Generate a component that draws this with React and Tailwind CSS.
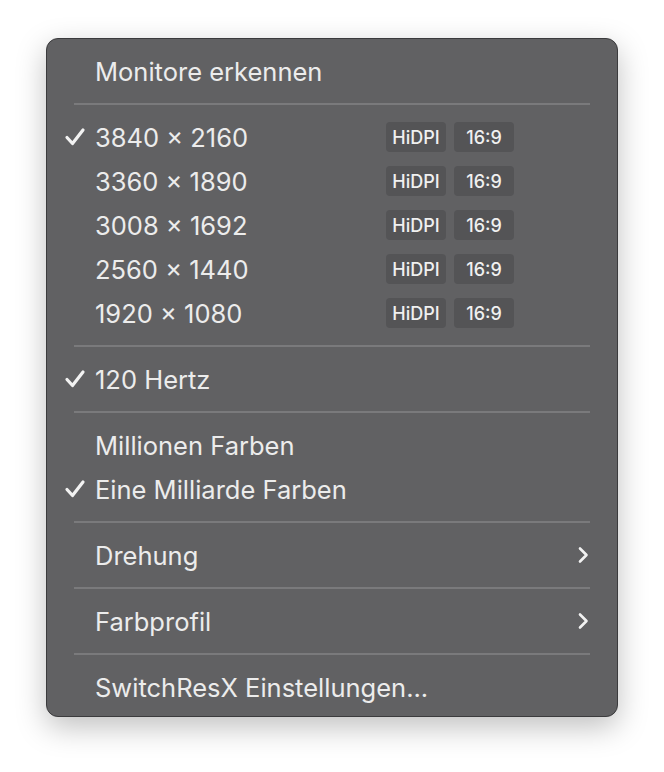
import React from 'react';

const Check = () => (
  <svg width="22" height="20" viewBox="0 0 22 20" className="absolute left-[17px] top-1/2 -translate-y-1/2">
    <path d="M3 10.5 L8.5 16.5 L19 3" fill="none" stroke="#f2f2f2" strokeWidth="3.2" strokeLinecap="round" strokeLinejoin="round" />
  </svg>
);

const Chevron = () => (
  <svg width="12" height="18" viewBox="0 0 12 18" className="absolute right-[28px] top-1/2 -translate-y-1/2">
    <path d="M3 2.5 L9.5 9 L3 15.5" fill="none" stroke="#f2f2f2" strokeWidth="2.6" strokeLinecap="round" strokeLinejoin="round" />
  </svg>
);

const Separator = () => (
  <div className="h-[22px] flex items-center px-[27px]">
    <div className="h-[2px] w-full bg-[#7a7a7c]" />
  </div>
);

const Badge = ({ children }) => (
  <span className="h-[30px] w-[60px] rounded-[4px] bg-[#545456] flex items-center justify-center text-[18px] font-medium text-[#f0f0f0]">
    {children}
  </span>
);

const Item = ({ label, checked, submenu, badges }) => (
  <div className="relative h-[44px] flex items-center pl-[48px] pt-[2px] text-[25.5px] text-[#ececec]">
    {checked && <Check />}
    <span>{label}</span>
    {badges && (
      <div className="absolute left-[339px] top-1/2 -translate-y-1/2 flex gap-[8px]">
        <Badge>HiDPI</Badge>
        <Badge>16:9</Badge>
      </div>
    )}
    {submenu && <Chevron />}
  </div>
);

const resolutions = ['3840 × 2160', '3360 × 1890', '3008 × 1692', '2560 × 1440', '1920 × 1080'];

export default function App() {
  return (
    <div className="w-[664px] h-[772px] bg-white pt-[38px] pl-[46px]" style={{ fontFamily: 'Inter, "Noto Sans", sans-serif' }}>
      <div className="w-[572px] h-[679px] rounded-[12px] border border-[#3b3b3d] bg-[#616163] pt-[10px] shadow-[0_10px_30px_rgba(0,0,0,0.25)]">
        <Item label="Monitore erkennen" />
        <Separator />
        {resolutions.map((r, i) => (
          <Item key={r} label={r} checked={i === 0} badges />
        ))}
        <Separator />
        <Item label="120 Hertz" checked />
        <Separator />
        <Item label="Millionen Farben" />
        <Item label="Eine Milliarde Farben" checked />
        <Separator />
        <Item label="Drehung" submenu />
        <Separator />
        <Item label="Farbprofil" submenu />
        <Separator />
        <Item label="SwitchResX Einstellungen..." />
      </div>
    </div>
  );
}
